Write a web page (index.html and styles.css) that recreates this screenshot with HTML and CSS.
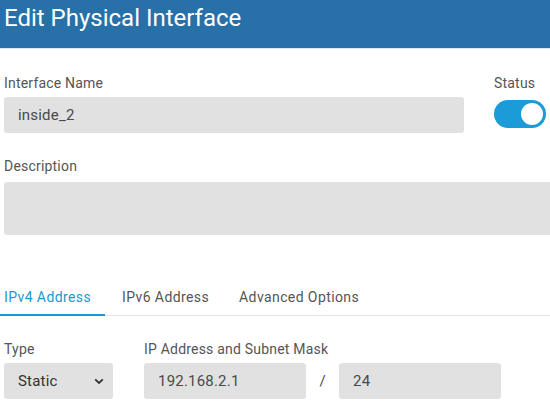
FILE: index.html
```html
<!DOCTYPE html>
<html>
<head>
<meta charset="utf-8">
<link rel="stylesheet" href="styles.css">
</head>
<body>
<div class="header"><h1 class="title">Edit Physical Interface</h1></div>
<div class="content">
  <div class="row-name">
    <div class="field grow">
      <label class="label">Interface Name</label>
      <div class="input">inside_2</div>
    </div>
    <div class="field status">
      <label class="label">Status</label>
      <div class="toggle"><span class="knob"></span></div>
    </div>
  </div>
  <div class="field desc-field">
    <label class="label">Description</label>
    <div class="textarea"></div>
  </div>
  <div class="tabs">
    <div class="tab active">IPv4 Address</div>
    <div class="tab">IPv6 Address</div>
    <div class="tab">Advanced Options</div>
  </div>
  <div class="row-ip">
    <div class="field type">
      <label class="label">Type</label>
      <div class="select">Static
        <svg class="chev" width="10" height="7" viewBox="0 0 10 7"><path d="M1.2 1.3 L5 5 L8.8 1.3" fill="none" stroke="#333" stroke-width="1.8"/></svg>
      </div>
    </div>
    <div class="field ipgroup">
      <label class="label">IP Address and Subnet Mask</label>
      <div class="ipinputs">
        <div class="input ip">192.168.2.1</div>
        <span class="slash">/</span>
        <div class="input ip">24</div>
      </div>
    </div>
  </div>
</div>
</body>
</html>
```
FILE: styles.css
```css
* { box-sizing: border-box; }
html, body { margin: 0; padding: 0; background: #fff; overflow: hidden; }
body { font-family: Roboto, "Liberation Sans", sans-serif; color: #4a4a4a; width: 550px; height: 405px; }
.header { background: #2870a8; height: 49px; border-bottom: 1px solid #dfe7ee; padding: 3px 0 0 4px; }
.title { margin: 0; font-weight: 400; font-size: 24px; color: #fff; line-height: 30px; }
.content { padding: 0 0 0 4px; }
.row-name { display: flex; margin-top: 26px; }
.field { display: flex; flex-direction: column; }
.grow { width: 460px; }
.status { margin-left: 30px; }
.label { font-size: 14px; color: #555; line-height: 16px; height: 16px; letter-spacing: 0.2px; }
.input { background: #e1e1e1; border-radius: 3px; height: 36px; margin-top: 6px; font-size: 15px; color: #4a4a4a; padding: 0 14px; display: flex; align-items: center; letter-spacing: 0.2px; }
.toggle { margin-top: 9px; width: 52px; height: 28px; border-radius: 14px; background: #1b9bd7; position: relative; }
.knob { position: absolute; right: 3px; top: 3px; width: 22px; height: 22px; border-radius: 50%; background: #fff; }
.desc-field { margin-top: 25px; }
.textarea { background: #e1e1e1; border-radius: 3px 0 0 3px; height: 53px; margin-top: 8px; }
.tabs { display: flex; margin-top: 49px; margin-left: -4px; border-bottom: 1px solid #e6e6e6; height: 32px; }
.tab { font-size: 14px; color: #555; padding: 5px 0 0 0; margin-right: 30px; line-height: 16px; letter-spacing: 0.4px; }
.tab.active { color: #1a98cf; border-bottom: 2px solid #1a98cf; padding-left: 4px; width: 105px; margin-right: 17px; margin-bottom: -1px; }
.row-ip { display: flex; margin-top: 25px; }
.type { width: 109px; }
.select { background: #e1e1e1; border-radius: 3px; height: 36px; margin-top: 6px; font-size: 15px; color: #333; padding: 0 9px 0 14px; display: flex; align-items: center; justify-content: space-between; letter-spacing: 0.2px; }
.ipgroup { margin-left: 31px; }
.ipinputs { display: flex; align-items: flex-end; }
.ip { width: 162px; }
.slash { width: 33px; text-align: center; font-size: 15px; height: 36px; line-height: 36px; }
```
